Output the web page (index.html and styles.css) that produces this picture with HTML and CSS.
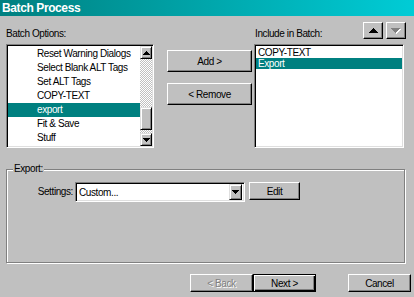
FILE: index.html
```html
<!DOCTYPE html>
<html lang="en">
<head>
    <meta charset="UTF-8">
    <meta name="viewport" content="width=device-width, initial-scale=1.0">
    <title>Batch Process</title>
    <link rel="stylesheet" href="styles.css">
</head>
<body>
    <div class="window">
        <div class="titlebar">Batch Process</div>

        <div class="top">
            <div class="col-left">
                <div class="label">Batch Options:</div>
                <div class="listbox list-options">
                    <ul class="items">
                        <li>Reset Warning Dialogs</li>
                        <li>Select Blank ALT Tags</li>
                        <li>Set ALT Tags</li>
                        <li>COPY-TEXT</li>
                        <li class="selected">export</li>
                        <li>Fit &amp; Save</li>
                        <li>Stuff</li>
                    </ul>
                    <div class="scrollbar">
                        <div class="sb-btn">
                            <svg width="7" height="4" viewBox="0 0 7 4"><path d="M3 0h1v1h1v1h1v1h1v1H0V3h1V2h1V1h1z"/></svg>
                        </div>
                        <div class="sb-track sb-track-top"></div>
                        <div class="sb-thumb"></div>
                        <div class="sb-track sb-track-bottom"></div>
                        <div class="sb-btn">
                            <svg width="7" height="4" viewBox="0 0 7 4"><path d="M0 0h7v1H6v1H5v1H4v1H3V3H2V2H1V1H0z"/></svg>
                        </div>
                    </div>
                </div>
            </div>

            <div class="col-mid">
                <button class="btn btn-add">Add &gt;</button>
                <button class="btn btn-remove">&lt; Remove</button>
            </div>

            <div class="col-right">
                <div class="right-head">
                    <span class="label">Include in Batch:</span>
                    <div class="move-btns">
                        <button class="btn btn-move">
                            <svg width="9" height="5" viewBox="0 0 9 5"><path d="M4 0h1v1h1v1h1v1h1v1h1v1H0V4h1V3h1V2h1V1h1z"/></svg>
                        </button>
                        <button class="btn btn-move disabled">
                            <svg width="10" height="6" viewBox="0 0 10 6">
                                <path fill="#fff" d="M1 1h9v1H9v1H8v1H7v1H6v1H5V5H4V4H3V3H2V2H1z"/>
                                <path fill="#808080" d="M0 0h9v1H8v1H7v1H6v1H5v1H4V4H3V3H2V2H1V1H0z"/>
                            </svg>
                        </button>
                    </div>
                </div>
                <div class="listbox list-batch">
                    <ul class="items">
                        <li>COPY-TEXT</li>
                        <li class="selected">Export</li>
                    </ul>
                </div>
            </div>
        </div>

        <div class="group">
            <span class="legend">Export:</span>
            <div class="settings-row">
                <span class="settings-label">Settings:</span>
                <div class="combo">
                    <span class="combo-text">Custom...</span>
                    <div class="combo-btn">
                        <svg width="7" height="4" viewBox="0 0 7 4"><path d="M0 0h7v1H6v1H5v1H4v1H3V3H2V2H1V1H0z"/></svg>
                    </div>
                </div>
                <button class="btn btn-edit">Edit</button>
            </div>
        </div>

        <div class="footer">
            <button class="btn btn-nav disabled">&lt; Back</button>
            <button class="btn btn-nav default">Next &gt;</button>
            <button class="btn btn-nav btn-cancel">Cancel</button>
        </div>
    </div>
</body>
</html>
```

FILE: styles.css
```css
body {
    margin: 0;
    background-color: #c0c0c0;
    font-family: "Liberation Sans", Arial, sans-serif;
    font-size: 10px;
    letter-spacing: -0.4px;
    color: #000;
}
.window {
    width: 414px;
    height: 297px;
    overflow: hidden;
}
.titlebar {
    height: 16px;
    line-height: 16px;
    padding-left: 2px;
    color: #fff;
    font-weight: bold;
    font-size: 12px;
    background: linear-gradient(to right, #008080, #00ccd6);
}
.top {
    display: flex;
    padding-top: 6px;
}
.label {
    line-height: 12px;
}
.col-left {
    margin-left: 6px;
    width: 148px;
}
.col-left .label {
    height: 16px;
    padding-top: 6px;
}
.listbox {
    box-sizing: border-box;
    height: 104px;
    background-color: #fff;
    border: 1px solid;
    border-color: #808080 #fff #fff #808080;
    box-shadow: inset 1px 1px 0 #000, inset -1px -1px 0 #dfdfdf;
    padding: 1px;
}
.list-options {
    display: flex;
}
.items {
    list-style: none;
    margin: 0;
    padding: 1px 0 0;
    flex: 1;
    overflow: hidden;
}
.list-options .items li {
    height: 14px;
    line-height: 14px;
    padding-left: 29px;
    white-space: nowrap;
}
.items li.selected {
    background-color: #008080;
    color: #fff;
}
.scrollbar {
    width: 12px;
    display: flex;
    flex-direction: column;
}
.sb-btn, .sb-thumb {
    box-sizing: border-box;
    background-color: #c0c0c0;
    border: 1px solid;
    border-color: #dfdfdf #000 #000 #dfdfdf;
    box-shadow: inset 1px 1px 0 #fff, inset -1px -1px 0 #808080;
}
.sb-btn {
    height: 13px;
    display: flex;
    align-items: center;
    justify-content: center;
}
.sb-track {
    background: repeating-conic-gradient(#fff 0 25%, #c0c0c0 0 50%) 0 0 / 2px 2px;
}
.sb-track-top {
    height: 48px;
}
.sb-thumb {
    height: 23px;
}
.sb-track-bottom {
    flex: 1;
}
.col-mid {
    margin-left: 13px;
    width: 85px;
    display: flex;
    flex-direction: column;
}
.btn {
    box-sizing: border-box;
    font-family: "Liberation Sans", Arial, sans-serif;
    font-size: 10px;
    letter-spacing: -0.4px;
    color: #000;
    background-color: #c0c0c0;
    border: 1px solid;
    border-color: #fff #000 #000 #fff;
    box-shadow: inset -1px -1px 0 #808080;
    padding: 0;
    display: flex;
    align-items: center;
    justify-content: center;
}
.btn-add, .btn-remove {
    height: 22px;
}
.btn-add {
    margin-top: 28px;
}
.btn-remove {
    margin-top: 11px;
}
.col-right {
    margin-left: 2px;
    width: 152px;
}
.right-head {
    height: 22px;
    display: flex;
    justify-content: space-between;
}
.right-head .label {
    padding-top: 6px;
    margin-left: 1px;
}
.move-btns {
    display: flex;
    gap: 3px;
}
.btn-move {
    width: 20px;
    height: 17px;
}
.list-batch {
    width: 150px;
}
.list-batch .items li {
    height: 11px;
    line-height: 11px;
    padding-left: 2px;
}
.btn.disabled {
    color: #808080;
    text-shadow: 1px 1px 0 #fff;
}
.group {
    position: relative;
    box-sizing: border-box;
    margin: 21px 0 0 6px;
    width: 399px;
    height: 94px;
    border: 1px solid #808080;
    box-shadow: inset 1px 1px 0 #fff, 1px 1px 0 #fff;
}
.legend {
    position: absolute;
    top: -7px;
    left: 6px;
    padding: 0 1px;
    line-height: 12px;
    background-color: #c0c0c0;
}
.settings-row {
    display: flex;
    align-items: flex-start;
    margin-top: 12px;
    padding-left: 26px;
}
.settings-label {
    width: 40px;
    text-align: right;
    line-height: 20px;
    margin-right: 2px;
}
.combo {
    box-sizing: border-box;
    width: 170px;
    height: 20px;
    display: flex;
    align-items: center;
    background-color: #fff;
    border: 1px solid;
    border-color: #808080 #fff #fff #808080;
    box-shadow: inset 1px 1px 0 #000, inset -1px -1px 0 #dfdfdf;
    padding: 2px 2px 2px 3px;
}
.combo-text {
    flex: 1;
}
.combo-btn {
    box-sizing: border-box;
    width: 13px;
    height: 16px;
    display: flex;
    align-items: center;
    justify-content: center;
    background-color: #c0c0c0;
    border: 1px solid;
    border-color: #dfdfdf #000 #000 #dfdfdf;
    box-shadow: inset 1px 1px 0 #fff, inset -1px -1px 0 #808080;
}
.btn-edit {
    margin-left: 4px;
    width: 51px;
    height: 18px;
}
.footer {
    display: flex;
    justify-content: flex-end;
    margin-top: 11px;
    padding-right: 3px;
}
.btn-nav {
    width: 63px;
    height: 18px;
}
.btn.default {
    border-color: #000;
    box-shadow: inset 1px 1px 0 #fff, inset -1px -1px 0 #000, inset -2px -2px 0 #808080;
}
.btn-cancel {
    margin-left: 32px;
}
```
